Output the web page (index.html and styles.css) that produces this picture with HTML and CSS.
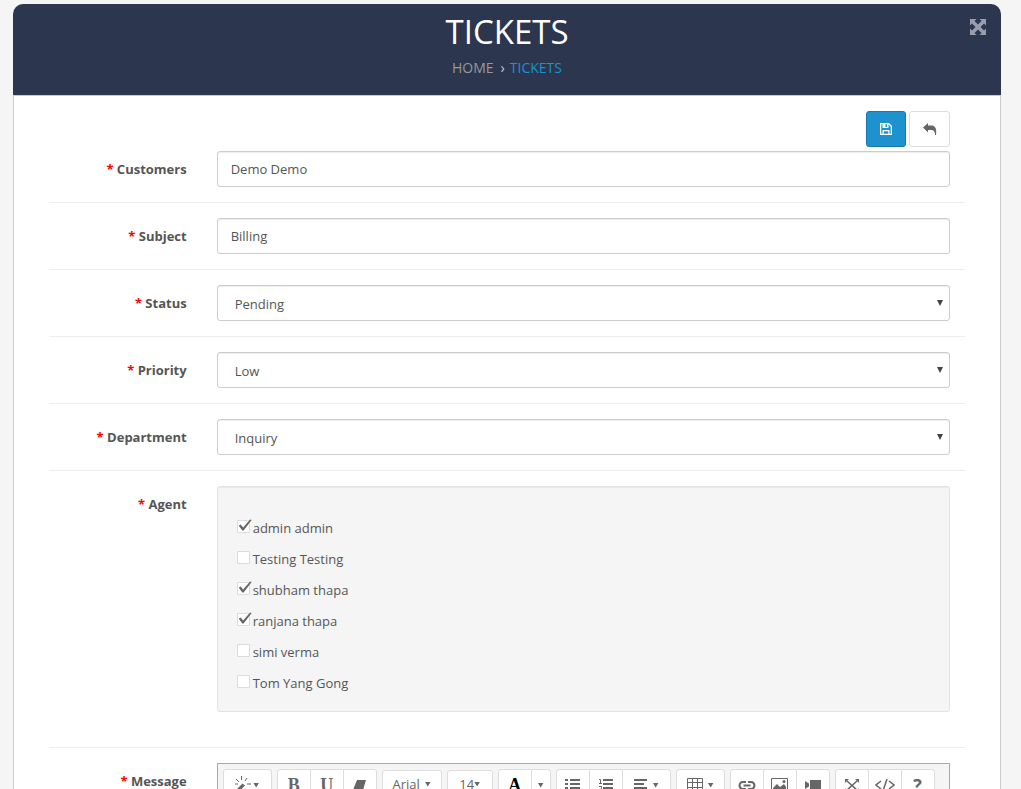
FILE: index.html
```html
<!DOCTYPE html>
<html lang="en">
<head>
  <meta charset="UTF-8" />
  <meta name="viewport" content="width=device-width, initial-scale=1" />
  <title>Tickets</title>
  <link rel="stylesheet" href="styles.css">
</head>
<body>
  <div class="panel">
    <header class="panel-head">
      <h1>TICKETS</h1>
      <nav class="breadcrumb">
        <a href="#">HOME</a><span class="sep">›</span><a href="#" class="current">TICKETS</a>
      </nav>
      <button type="button" class="expand" aria-label="Full screen">
        <svg width="18" height="18" viewBox="0 0 18 18"><path d="M1 1h6.500l-2 2L9 6.500 12.500 3l-2-2H17v6.500l-2-2L11.500 9l3.500 3.500 2-2V17h-6.500l2-2L9 11.500 5.500 15l2 2H1v-6.500l2 2L6.500 9 3 5.500l-2 2z"/></svg>
      </button>
    </header>

    <form class="panel-body">
      <div class="actions">
        <button type="submit" class="btn btn-primary" aria-label="Save">
          <svg width="12" height="12" viewBox="0 0 12 12"><path fill-rule="evenodd" d="M0 0h9l3 3v9H0zM1.300 1.300v9.400H2.500V7h7v3.700h1.200V3.700L8.500 1.300V5h-6V1.300zM5.500 1.300V4H7V1.300zM3.700 8.200v2.500h4.600V8.200z"/></svg>
        </button>
        <button type="button" class="btn" aria-label="Back">
          <svg width="14" height="12" viewBox="0 0 14 12"><path d="M0 4.500 5 0v2.500h3c4 0 6 2.500 5 9.500h-1c0-4-1.500-5-4-5H5v2.500z"/></svg>
        </button>
      </div>

      <div class="row row-first">
        <label for="customer"><span class="req">*</span> Customers</label>
        <input type="text" id="customer" class="control" value="Demo Demo">
      </div>

      <div class="row">
        <label for="subject"><span class="req">*</span> Subject</label>
        <input type="text" id="subject" class="control" value="Billing">
      </div>

      <div class="row">
        <label for="status"><span class="req">*</span> Status</label>
        <div class="select">
          <select id="status" class="control">
            <option>Pending</option>
          </select>
        </div>
      </div>

      <div class="row">
        <label for="priority"><span class="req">*</span> Priority</label>
        <div class="select">
          <select id="priority" class="control">
            <option>Low</option>
          </select>
        </div>
      </div>

      <div class="row">
        <label for="department"><span class="req">*</span> Department</label>
        <div class="select">
          <select id="department" class="control">
            <option>Inquiry</option>
          </select>
        </div>
      </div>

      <div class="row row-agents" role="group" aria-labelledby="agent-label">
        <span class="label" id="agent-label"><span class="req">*</span> Agent</span>
        <div class="well">
          <label class="check"><input type="checkbox" checked>admin admin</label>
          <label class="check"><input type="checkbox">Testing Testing</label>
          <label class="check"><input type="checkbox" checked>shubham thapa</label>
          <label class="check"><input type="checkbox" checked>ranjana thapa</label>
          <label class="check"><input type="checkbox">simi verma</label>
          <label class="check"><input type="checkbox">Tom Yang Gong</label>
        </div>
      </div>

      <div class="row">
        <label for="message"><span class="req">*</span> Message</label>
        <div class="editor">
          <div class="toolbar">
            <div class="group">
              <button type="button" class="tool wide" aria-label="Style">
                <svg width="18" height="18" viewBox="0 0 18 18"><path d="M0 15 7.500 7.500l2.500 2L2.500 17z"/><path class="line thin" d="M1 3l3 3M6.500 0v4M12 2l-2 3M12 8h4M0 8h3"/></svg><span class="caret"></span>
              </button>
            </div>
            <div class="group">
              <button type="button" class="tool letter">B</button>
              <button type="button" class="tool letter underline">U</button>
              <button type="button" class="tool" aria-label="Clear formatting">
                <svg width="14" height="12" viewBox="0 0 14 12"><path d="M4 1h9l-3 10H0z"/></svg>
              </button>
            </div>
            <div class="group">
              <button type="button" class="tool font">Arial <span class="caret"></span></button>
            </div>
            <div class="group">
              <button type="button" class="tool size">14<span class="caret"></span></button>
            </div>
            <div class="group">
              <button type="button" class="tool letter color">A</button>
              <button type="button" class="tool slim" aria-label="More colors"><span class="caret"></span></button>
            </div>
            <div class="group">
              <button type="button" class="tool" aria-label="Unordered list">
                <svg width="16" height="14" viewBox="0 0 16 14"><path d="M0 1h3v2H0zM5 1h10v2H5zM0 5h3v2H0zM5 5h10v2H5zM0 9h3v2H0zM5 9h10v2H5z"/></svg>
              </button>
              <button type="button" class="tool" aria-label="Ordered list">
                <svg width="16" height="16" viewBox="0 0 16 16"><path d="M5 2h10v2H5zM5 6h10v2H5zM5 10h10v2H5z"/><path class="line thin" d="M1 2.500h1.500V6M1 6.500h3M1 9.500h2.500v2L1 13.500h3"/></svg>
              </button>
              <button type="button" class="tool wide" aria-label="Paragraph">
                <svg width="14" height="12" viewBox="0 0 14 12"><path d="M0 0h13v2H0zM0 4h10v2H0zM0 8h13v2H0z"/></svg><span class="caret spaced"></span>
              </button>
            </div>
            <div class="group">
              <button type="button" class="tool wide" aria-label="Table">
                <svg width="16" height="16" viewBox="0 0 16 16"><path class="line thin" d="M.5 1.500h15v13H.5zM.5 5.500h15M.5 10.500h15M5.500 1.500v13M10.500 1.500v13"/></svg><span class="caret spaced"></span>
              </button>
            </div>
            <div class="group">
              <button type="button" class="tool" aria-label="Link">
                <svg width="18" height="12" viewBox="0 0 18 12"><path class="line thick" d="M8 3H5a3 3 0 0 0 0 7h3M10 3h3a3 3 0 0 1 0 7h-3M5.500 6.500h7"/></svg>
              </button>
              <button type="button" class="tool" aria-label="Picture">
                <svg width="17" height="14" viewBox="0 0 17 14"><path class="line thin" d="M.5.5h16v13H.5z"/><path d="M2 12V10l4-4 3 3 4-3 2 3v3z"/><circle cx="13" cy="3.500" r="1.500"/></svg>
              </button>
              <button type="button" class="tool" aria-label="Video">
                <svg width="16" height="12" viewBox="0 0 16 12"><path d="M0 2l4 2.500v3L0 10zM5 1h11v10H5z"/></svg>
              </button>
            </div>
            <div class="group">
              <button type="button" class="tool" aria-label="Full screen">
                <svg width="14" height="14" viewBox="0 0 14 14"><path d="M0 1h4L0 5zM14 1v4l-4-4zM0 14v-4l4 4zM14 14h-4l4-4z"/><path class="line" d="M2 3l10 9M12 3 2 12"/></svg>
              </button>
              <button type="button" class="tool" aria-label="Code view">
                <svg width="20" height="12" viewBox="0 0 20 12"><path class="line" d="M6 2 1 6l5 4M14 2l5 4-5 4M12 0 8 12"/></svg>
              </button>
              <button type="button" class="tool help">?</button>
            </div>
          </div>
          <textarea id="message" rows="8"></textarea>
        </div>
      </div>
    </form>
  </div>
</body>
</html>
```

FILE: styles.css
```css
* { box-sizing: border-box; }

body {
  margin: 0;
  height: 100vh;
  overflow: hidden;
  padding: 4px 20px 0 13px;
  background: #f5f5f5;
  color: #555;
  font: 13px/20px "Open Sans", sans-serif;
}

button, input, select, textarea { font: inherit; color: inherit; }
button { cursor: pointer; }
svg { display: block; fill: currentColor; }
.line { fill: none; stroke: currentColor; stroke-width: 1.5; }
.thin { stroke-width: 1; }
.thick { stroke-width: 2; }

/* header */
.panel-head {
  position: relative;
  height: 91px;
  padding-top: 8px;
  border-radius: 10px 10px 0 0;
  background: #2c364f;
  text-align: center;
}
.panel-head h1 { margin: 0; color: #fff; font-size: 33px; font-weight: 400; line-height: 40px; }
.breadcrumb { margin-top: 6px; font-size: 14px; }
.breadcrumb a { color: #999; text-decoration: none; }
.breadcrumb .current { color: #1e91cf; }
.sep { padding: 0 5px 0 7px; color: #ccc; }
.expand {
  position: absolute;
  top: 14px;
  right: 14px;
  padding: 0;
  border: 0;
  background: none;
  color: #9a9dac;
}

/* form */
.panel-body { padding: 15px 35px; border: 1px solid #ccc; background: #fff; }
.actions { display: flex; justify-content: flex-end; gap: 3px; padding-right: 15px; margin-bottom: 4px; }
.btn {
  display: flex;
  align-items: center;
  justify-content: center;
  width: 41px;
  height: 36px;
  padding: 0;
  border: 1px solid #ddd;
  border-radius: 3px;
  background: #fff;
  color: #666;
}
.btn-primary { width: 40px; border-color: #1978ab; background: #1e91cf; color: #fff; }

.row {
  display: grid;
  grid-template-columns: 1fr 5fr;
  padding: 15px 0;
  border-top: 1px solid #ededed;
}
.row-first { padding-top: 0; border-top: 0; }
.row-agents { padding-bottom: 35px; }
.row > label, .label { padding: 8px 15px 0; font-weight: 700; text-align: right; }
.req { color: #f00; }
.row > :last-child { margin: 0 15px; }

.control {
  height: 36px;
  padding: 8px 13px;
  border: 1px solid #ccc;
  border-radius: 3px;
  background: #fff;
  box-shadow: inset 0 1px 1px rgba(0, 0, 0, 0.075);
}
.select { position: relative; }
.select .control { display: block; width: 100%; padding: 8px 17px; appearance: none; }
.select::after {
  content: "";
  position: absolute;
  top: 15px;
  right: 7px;
  width: 6px;
  height: 6px;
  background: #444;
  clip-path: polygon(0 0, 100% 0, 50% 100%);
  pointer-events: none;
}

.well {
  padding: 31px 19px 7px;
  border: 1px solid #e3e3e3;
  border-radius: 3px;
  background: #f5f5f5;
  box-shadow: inset 0 1px 1px rgba(0, 0, 0, 0.05);
}
.check { display: flex; align-items: flex-start; gap: 3px; height: 20px; margin-bottom: 11px; }
.check input {
  position: relative;
  flex: none;
  width: 13px;
  height: 13px;
  margin: 2px 0 0;
  border: 1px solid #dcdcdc;
  border-radius: 1px;
  background: #fff;
  appearance: none;
}
.check input:checked::before {
  content: "";
  position: absolute;
  top: -2px;
  left: 1px;
  width: 13px;
  height: 12px;
  background: #666;
  clip-path: polygon(0 54%, 16% 46%, 34% 70%, 88% 4%, 100% 8%, 38% 96%, 28% 96%);
}

/* message editor */
.editor { border: 1px solid #a9a9a9; }
.toolbar { display: flex; align-items: flex-end; gap: 5px; padding: 5px; background: #f5f5f5; }
.group { display: flex; }
.tool {
  display: flex;
  align-items: center;
  justify-content: center;
  width: 34px;
  height: 32px;
  padding: 0;
  border: 1px solid #ddd;
  background: #fff;
  color: #666;
}
.tool + .tool { margin-left: -1px; }
.tool:first-child { border-radius: 3px 0 0 3px; }
.tool:last-child { border-radius: 0 3px 3px 0; }
.tool:only-child { border-radius: 3px; }
.wide { width: 49px; }
.font, .size { height: 31px; padding-bottom: 3px; }
.font { width: 60px; gap: 5px; }
.size { width: 46px; }
.slim { width: 20px; }
.letter { font-family: "Liberation Serif", serif; font-size: 18px; font-weight: 700; }
.underline { text-decoration: underline; }
.color { color: #000; }
.help { font-size: 18px; font-weight: 700; }
.caret { width: 6px; height: 5px; background: #666; clip-path: polygon(0 0, 100% 0, 50% 100%); }
.spaced { margin-left: 5px; }
.editor textarea { display: block; width: 100%; border: 0; resize: none; }
```
